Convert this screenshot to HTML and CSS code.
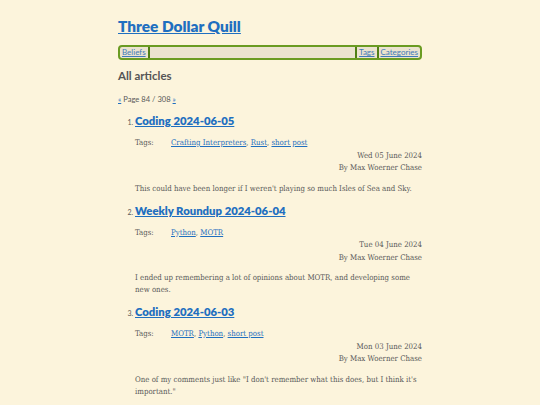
FILE: index.html
```html
<!DOCTYPE html>
<html>
<head>
<meta charset="utf-8">
<link rel="stylesheet" href="styles.css">
</head>
<body>
<div class="page">
  <header class="site-header">
    <h1 class="site-title"><a href="#">Three Dollar Quill</a></h1>
    <nav class="menu">
      <a href="#" class="menu-item">Beliefs</a>
      <span class="menu-spacer"></span>
      <a href="#" class="menu-item">Tags</a>
      <a href="#" class="menu-item last">Categories</a>
    </nav>
  </header>
  <main>
    <h2 class="section-title">All articles</h2>
    <p class="pager"><a href="#">«</a> Page 84 / 308 <a href="#">»</a></p>
    <ol class="articles">
      <li class="article">
        <h3 class="article-title"><a href="#">Coding 2024-06-05</a></h3>
        <div class="tags"><span class="tags-label">Tags:</span><span><a href="#">Crafting Interpreters</a>, <a href="#">Rust</a>, <a href="#">short post</a></span></div>
        <div class="meta"><div>Wed 05 June 2024</div><div>By Max Woerner Chase</div></div>
        <p class="summary">This could have been longer if I weren't playing so much Isles of Sea and Sky.</p>
      </li>
      <li class="article">
        <h3 class="article-title"><a href="#">Weekly Roundup 2024-06-04</a></h3>
        <div class="tags"><span class="tags-label">Tags:</span><span><a href="#">Python</a>, <a href="#">MOTR</a></span></div>
        <div class="meta"><div>Tue 04 June 2024</div><div>By Max Woerner Chase</div></div>
        <p class="summary">I ended up remembering a lot of opinions about MOTR, and developing some new ones.</p>
      </li>
      <li class="article">
        <h3 class="article-title"><a href="#">Coding 2024-06-03</a></h3>
        <div class="tags"><span class="tags-label">Tags:</span><span><a href="#">MOTR</a>, <a href="#">Python</a>, <a href="#">short post</a></span></div>
        <div class="meta"><div>Mon 03 June 2024</div><div>By Max Woerner Chase</div></div>
        <p class="summary">One of my comments just like "I don't remember what this does, but I think it's important."</p>
      </li>
    </ol>
  </main>
</div>
</body>
</html>
```

FILE: styles.css
```css
html, body {
  margin: 0;
  padding: 0;
  background: #fcf4dc;
}
body {
  font-family: "DejaVu Serif Condensed", "DejaVu Serif", serif;
  font-stretch: condensed;
  color: #5a5a5a;
  font-size: 7.8px;
}
a { color: #1f6fc0; }
.page {
  width: 304px;
  margin: 0 auto;
  padding-top: 15px;
}
.site-title {
  font-family: "Lato", "Noto Sans", sans-serif;
  font-size: 15.4px;
  font-weight: 800;
  margin: 0 0 8px 0;
  line-height: 22px;
}
.site-title a { color: #1f6fc0; }
.menu {
  display: flex;
  border: 2px solid #6a9b22;
  border-radius: 4px;
  background: #ebe3cf;
  padding: 0;
  font-family: "Lato", "Noto Sans", sans-serif;
  font-size: 8px;
  line-height: 11px;
}
.menu-item {
  padding: 0 2px;
  border-right: 2px solid #4f7f14;
  color: #3f7ab8;
}
.menu-item.last { border-right: none; }
.menu-spacer {
  flex: 1;
  border-right: 2px solid #4f7f14;
}
.section-title {
  font-family: "Lato", "Noto Sans", sans-serif;
  font-size: 11.5px;
  font-weight: 700;
  color: #555;
  margin: 8px 0 0 0;
  line-height: 16px;
}
.pager {
  font-family: "Lato", "Noto Sans", sans-serif;
  font-size: 7.6px;
  margin: 10px 0 0 0;
  line-height: 10px;
}
.articles {
  margin: 9px 0 0 0;
  padding-left: 17px;
}
.article::marker {
  font-family: "Lato", "Noto Sans", sans-serif;
  font-size: 7px;
}
.article-title {
  font-family: "Lato", "Noto Sans", sans-serif;
  font-size: 11.3px;
  font-weight: 800;
  margin: 0;
  line-height: 16px;
}
.tags {
  display: flex;
  margin-top: 9px;
  line-height: 10px;
}
.tags-label { width: 36px; }
.meta {
  text-align: right;
  line-height: 12.5px;
  margin-top: 1.5px;
}
.summary {
  margin: 8px 0 8px 0;
  line-height: 12px;
}
```
